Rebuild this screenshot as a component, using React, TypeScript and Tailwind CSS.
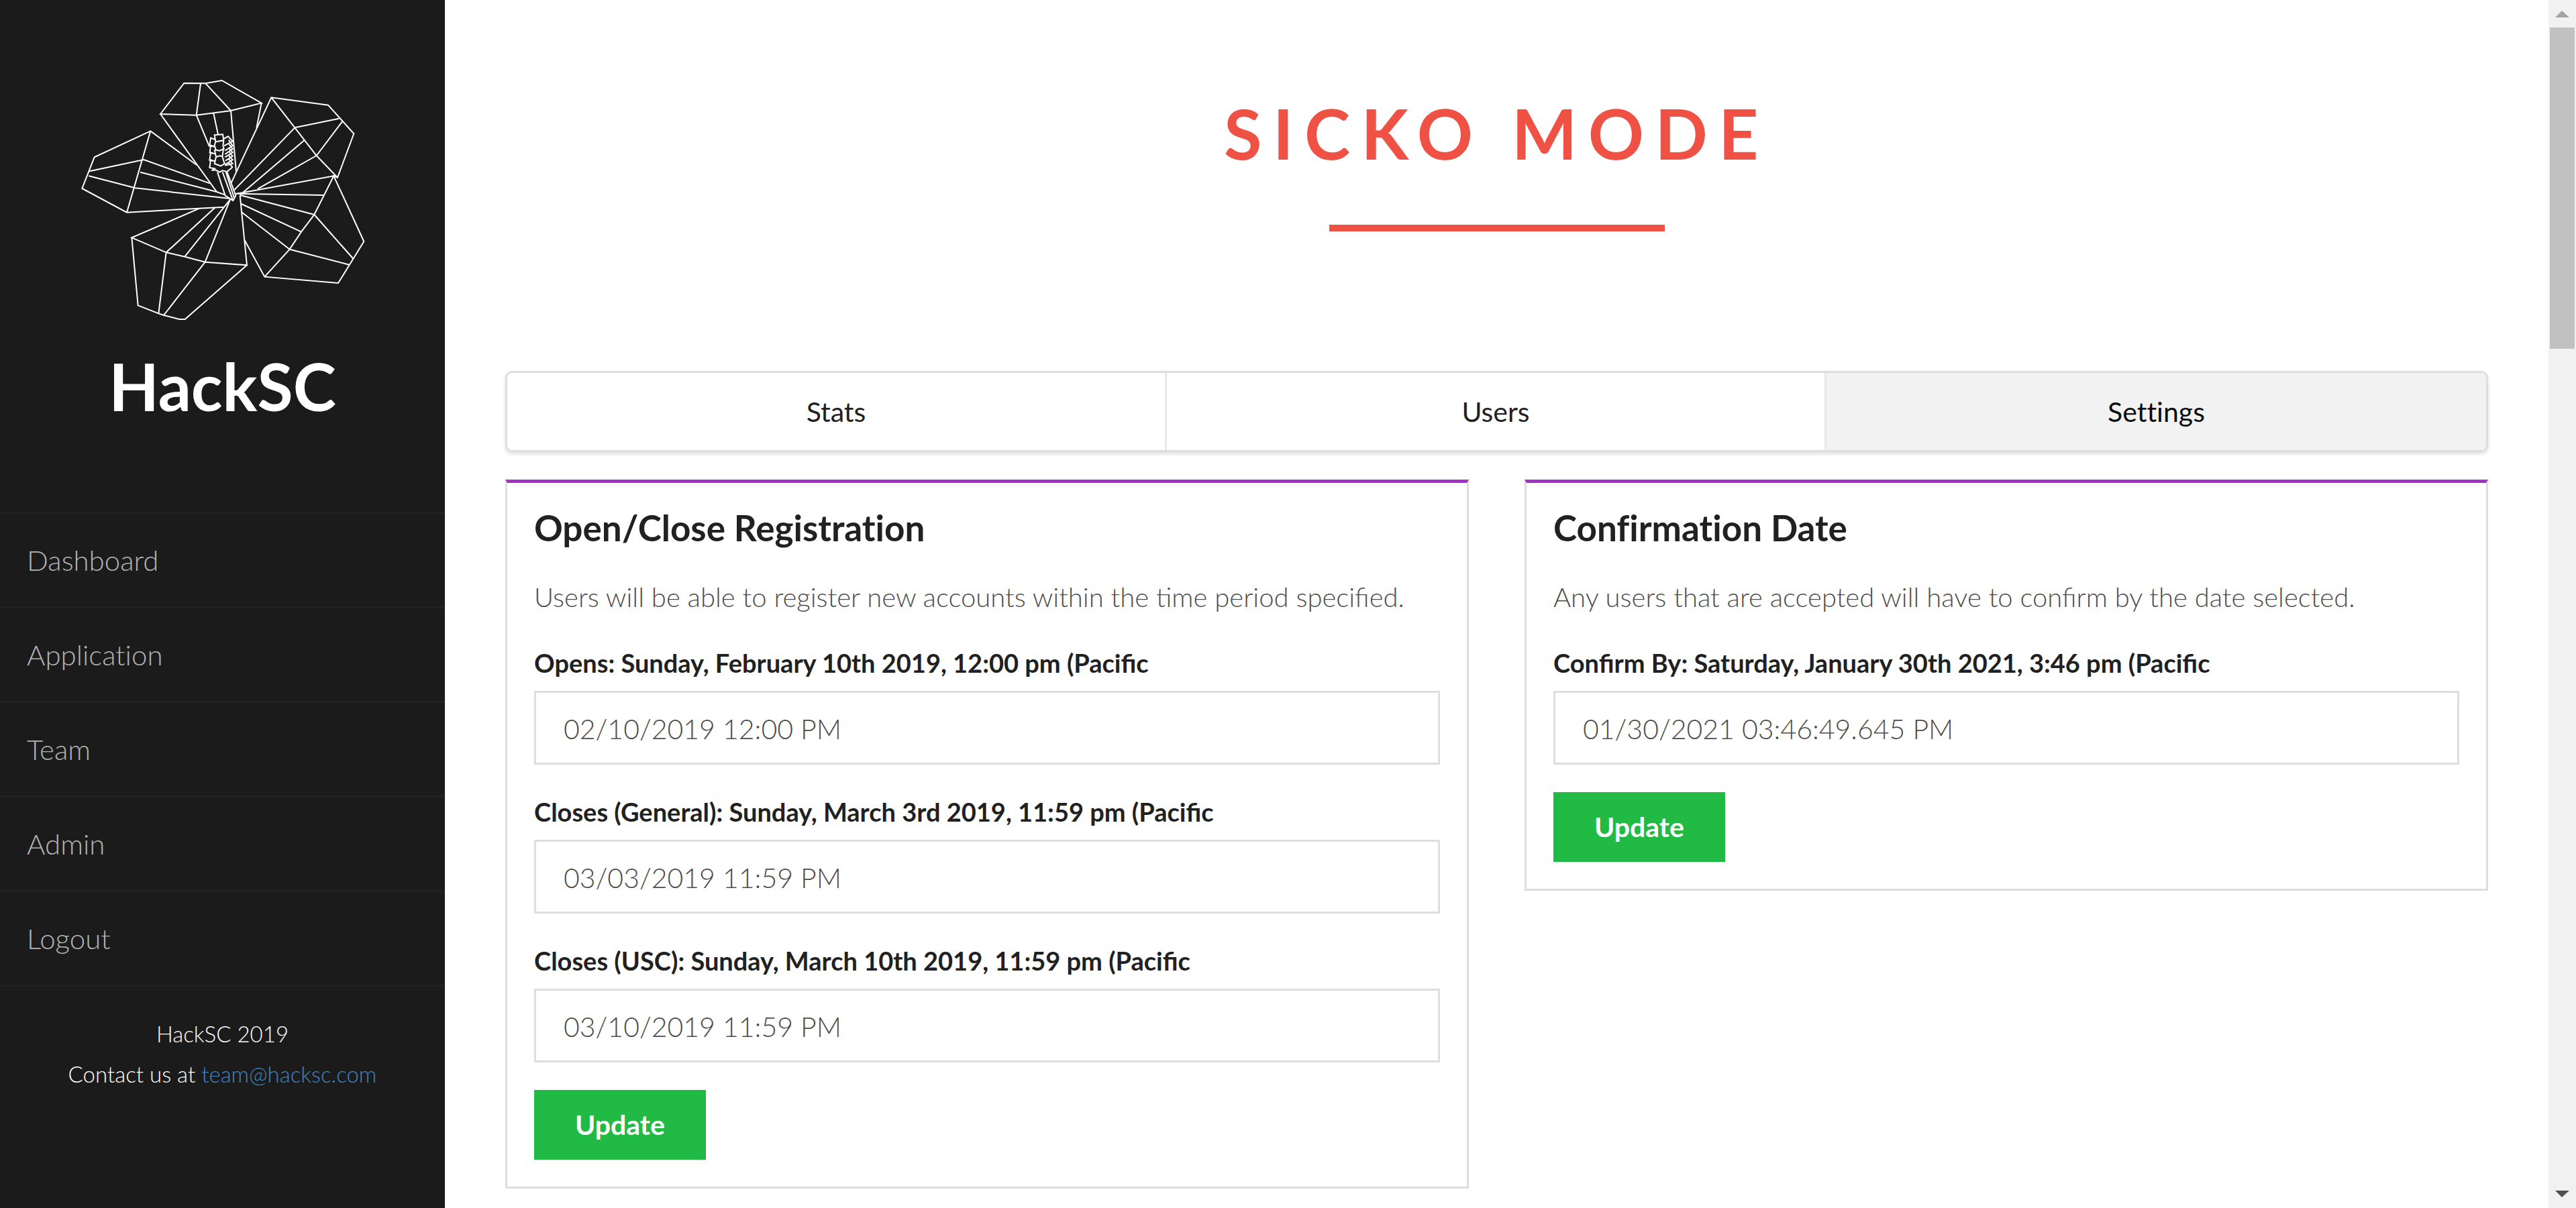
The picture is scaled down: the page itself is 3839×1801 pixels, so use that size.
import React from "react";

const navItems = ["Dashboard", "Application", "Team", "Admin", "Logout"];
const tabs = ["Stats", "Users", "Settings"];

function HibiscusLogo() {
  return (
    <svg
      viewBox="4 0 1380 1200"
      className="mx-auto h-[400px] w-[460px]"
      fill="none"
      stroke="#ffffff"
      strokeWidth="6"
      strokeLinejoin="miter"
      role="img"
      aria-label="HackSC flower"
    >
      {/* top petal */}
      <path d="M415 210 521 72 617 73 690 60 867 161 730 195 576 215ZM595 73 576 215 634 355M617 73 730 195 754 468M867 161 845 272M653 207 673 302M415 210 667 558" />
      {/* left petal */}
      <path d="M577 438 371 286 120 403 65 543 265 650 700 626M371 286 265 650M98 466 341 414 636 520M95 487 303 541 727 588M325 470 667 558 705 572" />
      {/* upper right petal */}
      <path d="M732 518 756 466 911 136 1165 170 1280 298 1207 494 1113 396 1016 271 911 136M1016 271 1214 230M1113 396 1228 244M1016 271 745 550M1058 328 785 560M1113 396 850 545" />
      {/* lower right petal */}
      <path d="M750 568 1190 487 1103 660 1045 737 993 815 881 938M1207 494 1190 487 1325 780 1210 966 881 938 792 775M1145 573 750 566M1103 660 770 572M1045 737 777 612M993 815 777 648M993 815 1262 885M1103 660 1278 858" />
      {/* bottom petal */}
      <path d="M590 632 287 763 441 829 524 848 615 872 802 886 771 575M287 763 315 1066 407 1102 430 1110 500 1128 525 1128 802 886M441 829 407 1102M615 872 430 1110M441 829 660 628M524 848 727 592 615 872" />
      {/* stamen */}
      <path d="M670 470 705 575 740 597 752 575 713 468M693 470 738 592M708 470 745 585" />
      <path d="M657 304 694 301 698 328 662 334ZM662 334 657 351 664 372M698 328 695 352 700 368M657 370 680 374 697 366 692 400 702 432 685 442 657 432 664 402 680 397 694 400M657 370 664 402" />
      <path d="M659 324 640 317 635 352 658 356 640 350 636 383 659 388 640 382 635 417 658 421 640 415 635 450 657 454 645 462 662 460 680 470 692 463 712 468 733 452 738 445" />
      <path d="M696 322 718 310 738 332 700 352M720 326 738 352 704 374M722 345 738 366 704 390M722 362 738 382 704 403M722 378 738 398 706 419M722 396 738 415 704 436M722 412 738 432 704 440M720 428 738 448" />
    </svg>
  );
}

function Field({ id, label, value }: { id: string; label: string; value: string }) {
  return (
    <div className="mb-[42px] last-of-type:mb-[41px]">
      <label htmlFor={id} className="mb-[14px] block text-[38px] font-bold leading-[56px]">
        {label}
      </label>
      <input
        id={id}
        type="text"
        defaultValue={value}
        className="block h-[110px] w-full border-[3px] border-[#dededf] bg-white px-[41px] pt-[3px] text-[41px] font-light text-[#4d4d4d] outline-none"
      />
    </div>
  );
}

function Card({ title, text, children }: { title: string; text: string; children: React.ReactNode }) {
  return (
    <section className="border-[3px] border-t-[5px] border-[#dededf] border-t-[#a333c8] p-10">
      <h2 className="text-[53px] font-bold leading-[54px] [font-variant-ligatures:none]">{title}</h2>
      <p className="mb-10 mt-[46px] text-[40px] font-light leading-[60px] text-[#4d4d4d]">{text}</p>
      <form onSubmit={(e) => e.preventDefault()}>
        {children}
        <button type="submit" className="block h-[104px] bg-[#21ba45] px-[61px] text-[41px] font-bold text-white">
          Update
        </button>
      </form>
    </section>
  );
}

export default function App() {
  return (
    <div className="flex min-h-screen bg-white font-['Lato',sans-serif] text-[#212121]">
      <aside className="w-[663px] shrink-0 bg-[#1b1b1b] pt-[100px] text-white">
        <HibiscusLogo />
        <div className="mt-7 text-center text-[97px] font-bold leading-[96px]">HackSC</div>
        <nav className="mt-[139px] border-b-[3px] border-[#212121]">
          {navItems.map((item) => (
            <a
              key={item}
              href="#"
              className="flex h-[141px] items-center border-t-[3px] border-[#212121] px-10 text-[42px] font-light text-[#b4b4b4] [font-variant-ligatures:none]"
            >
              {item}
            </a>
          ))}
        </nav>
        <footer className="pt-10 text-center text-[33px] font-light leading-[60px]">
          <p>HackSC 2019</p>
          <p>
            Contact us at{" "}
            <a href="mailto:team@hacksc.com" className="text-[#4183c4]">
              team@hacksc.com
            </a>
          </p>
        </footer>
      </aside>

      <main className="min-w-0 flex-1 px-[90px] pt-[138px]">
        <h1 className="text-center text-[103px] font-bold leading-[120px] tracking-[0.16em] text-[#f05145]">
          SICKO MODE
        </h1>
        <div className="mx-auto mt-[77px] h-[10px] w-[500px] bg-[#f05145]" />

        <div className="mt-[208px] grid h-[121px] grid-cols-3 overflow-hidden rounded-[10px] border-[3px] border-[#dededf] shadow-[0_3px_5px_rgba(34,36,38,0.15)]">
          {tabs.map((tab) => (
            <button
              key={tab}
              type="button"
              aria-pressed={tab === "Settings"}
              className="border-r-[3px] border-[#e9e9e9] text-[41px] [font-variant-ligatures:none] last:border-r-0 aria-pressed:bg-[#f2f2f2] aria-pressed:text-[#0d0d0d]"
            >
              {tab}
            </button>
          ))}
        </div>

        <div className="mt-[41px] grid grid-cols-2 items-start gap-[83px]">
          <Card
            title="Open/Close Registration"
            text="Users will be able to register new accounts within the time period specified."
          >
            <Field id="opens" label="Opens: Sunday, February 10th 2019, 12:00 pm (Pacific" value="02/10/2019 12:00 PM" />
            <Field id="closes-general" label="Closes (General): Sunday, March 3rd 2019, 11:59 pm (Pacific" value="03/03/2019 11:59 PM" />
            <Field id="closes-usc" label="Closes (USC): Sunday, March 10th 2019, 11:59 pm (Pacific" value="03/10/2019 11:59 PM" />
          </Card>
          <Card
            title="Confirmation Date"
            text="Any users that are accepted will have to confirm by the date selected."
          >
            <Field id="confirm-by" label="Confirm By: Saturday, January 30th 2021, 3:46 pm (Pacific" value="01/30/2021 03:46:49.645 PM" />
          </Card>
        </div>
      </main>

      <div className="flex w-[41px] shrink-0 flex-col items-center bg-[#f1f1f1]" aria-hidden="true">
        <svg viewBox="0 0 41 41" className="h-[41px] w-[41px]">
          <path d="M10 26 20 16 31 26Z" fill="#a3a3a3" />
        </svg>
        <div className="h-[479px] w-[37px] bg-[#c1c1c1]" />
        <svg viewBox="0 0 41 41" className="mt-auto h-[41px] w-[41px]">
          <path d="M10 15 20 25 31 15Z" fill="#505050" />
        </svg>
      </div>
    </div>
  );
}
